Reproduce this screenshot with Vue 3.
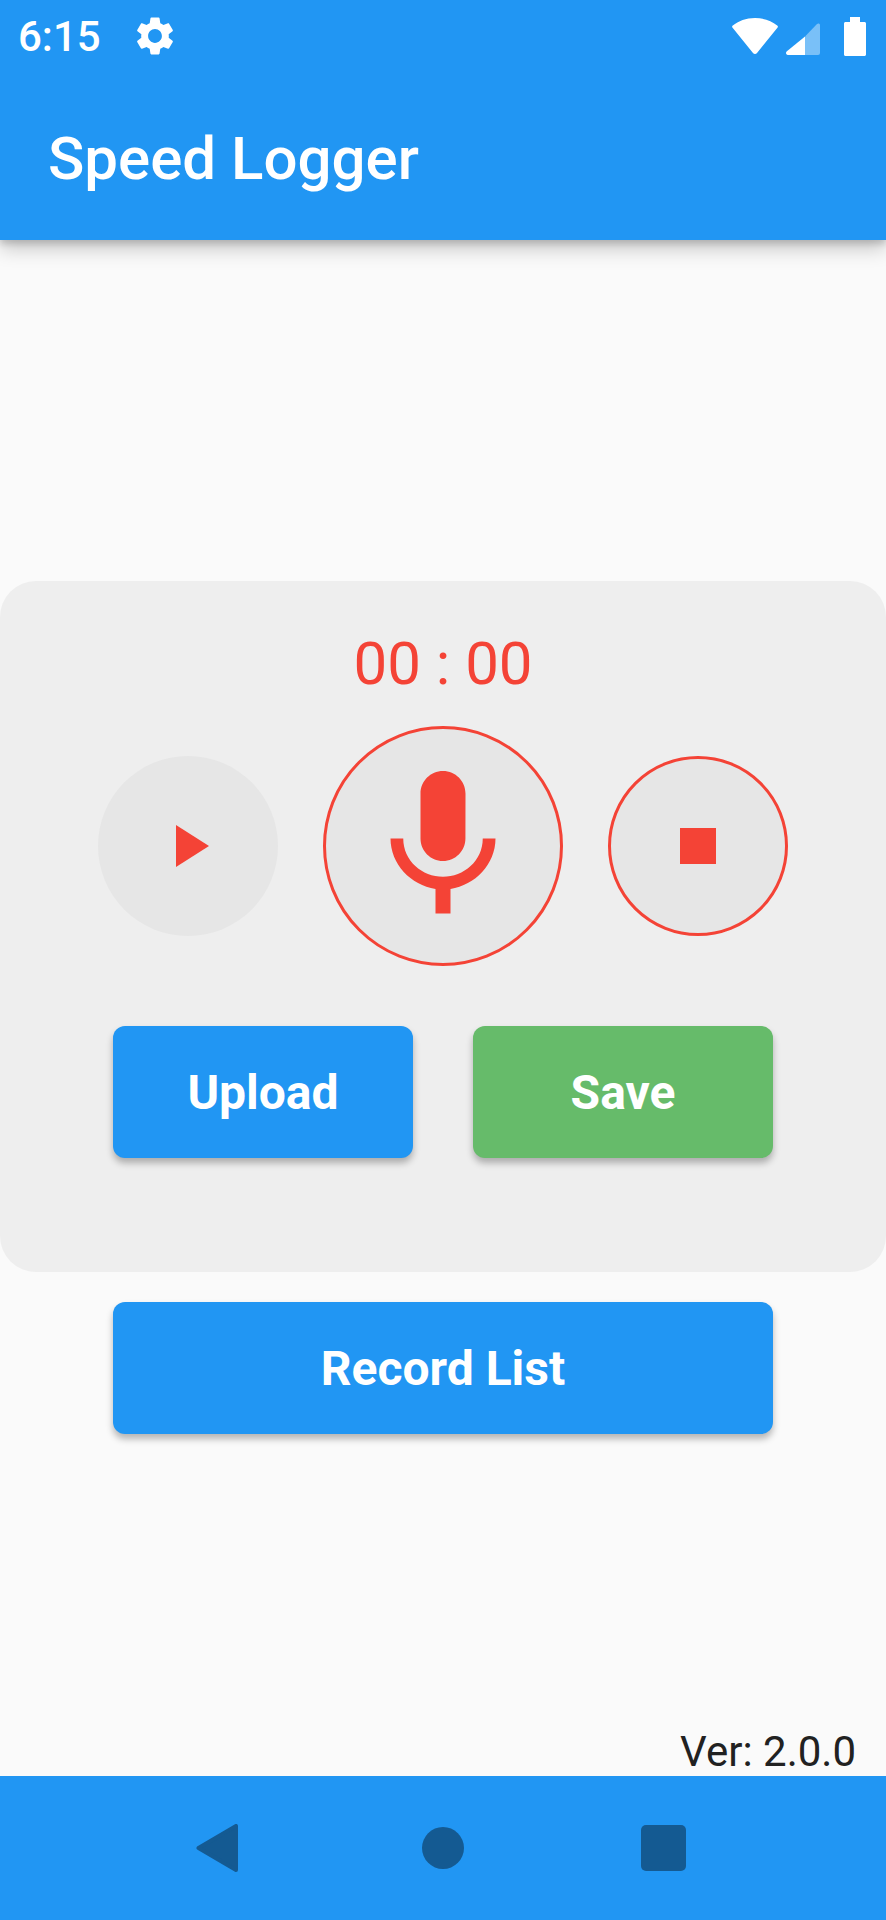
<template>
  <div class="phone">
    <header class="app-header">
      <div class="status-bar">
        <span class="clock">6:15</span>
        <svg class="gear" viewBox="0 0 24 24" fill="#fff">
          <path d="M19.14 12.94c.04-.3.06-.61.06-.94 0-.32-.02-.64-.07-.94l2.03-1.58c.18-.14.23-.41.12-.61l-1.92-3.32c-.12-.22-.37-.29-.59-.22l-2.39.96c-.5-.38-1.03-.7-1.62-.94l-.36-2.54c-.04-.24-.24-.41-.48-.41h-3.84c-.24 0-.43.17-.47.41l-.36 2.54c-.59.24-1.13.57-1.62.94l-2.39-.96c-.22-.08-.47 0-.59.22L2.74 8.87c-.12.21-.08.47.12.61l2.03 1.58c-.05.3-.09.63-.09.94s.02.64.07.94l-2.03 1.58c-.18.14-.23.41-.12.61l1.92 3.32c.12.22.37.29.59.22l2.39-.96c.5.38 1.03.7 1.62.94l.36 2.54c.05.24.24.41.48.41h3.84c.24 0 .44-.17.47-.41l.36-2.54c.59-.24 1.13-.56 1.62-.94l2.39.96c.22.08.47 0 .59-.22l1.92-3.32c.12-.22.07-.47-.12-.61l-2.01-1.58zM12 15.6c-1.98 0-3.6-1.62-3.6-3.6s1.62-3.6 3.6-3.6 3.6 1.62 3.6 3.6-1.62 3.6-3.6 3.6z" />
        </svg>
        <div class="status-icons">
          <svg class="wifi" viewBox="0 0 46 36" fill="#fff">
            <path d="M23 0C14 0 6.500 3 .8 7.500a1.500 1.500 0 0 0-.2 2.200L21 35a2.600 2.600 0 0 0 4 0L45.400 9.700a1.500 1.500 0 0 0-.2-2.200C39.500 3 32 0 23 0z" />
          </svg>
          <svg class="signal" viewBox="0 0 34 34" fill="#fff">
            <path d="M19 15.500V34H2a2 2 0 0 1-1.400-3.400z" />
            <path opacity=".4" d="M19 34V15.500L31 3c1-1 3-.6 3 1v28a2 2 0 0 1-2 2z" />
          </svg>
          <svg class="battery" viewBox="0 0 22 39" fill="#fff">
            <path d="M6 0h10v5h4.500c.8 0 1.500.7 1.500 1.500V37.500c0 .8-.7 1.500-1.500 1.500H1.500C.7 39 0 38.300 0 37.500V6.500C0 5.700.7 5 1.500 5H6z" />
          </svg>
        </div>
      </div>
      <div class="toolbar">Speed Logger</div>
    </header>

    <main class="content">
      <div class="center-group">
        <section class="recorder">
          <div class="timer">00 : 00</div>
          <div class="controls">
            <button class="round-btn small">
              <svg class="icon-sm" viewBox="0 0 24 24" fill="#f44336"><path d="M8 5v14l11-7z" /></svg>
            </button>
            <button class="round-btn large active">
              <svg class="icon-lg" viewBox="0 0 24 24" fill="#f44336">
                <path d="M12 14c1.660 0 2.990-1.340 2.990-3L15 5c0-1.660-1.340-3-3-3S9 3.340 9 5v6c0 1.660 1.340 3 3 3zm5.300-3c0 3-2.540 5.100-5.300 5.100S6.700 14 6.700 11H5c0 3.410 2.720 6.230 6 6.720V21h2v-3.280c3.280-.48 6-3.300 6-6.720h-1.700z" />
              </svg>
            </button>
            <button class="round-btn small active">
              <svg class="icon-sm" viewBox="0 0 24 24" fill="#f44336"><path d="M6 6h12v12H6z" /></svg>
            </button>
          </div>
          <div class="actions">
            <button class="action-btn blue">Upload</button>
            <button class="action-btn green">Save</button>
          </div>
        </section>
        <button class="action-btn blue wide">Record List</button>
      </div>
      <div class="version">Ver: 2.0.0</div>
    </main>

    <footer class="nav-bar">
      <svg class="nav-back" viewBox="0 0 42 48" fill="#145a92" stroke="#145a92" stroke-width="4" stroke-linejoin="round">
        <path d="M2.500 24L40 2v44z" />
      </svg>
      <div class="nav-home"></div>
      <div class="nav-recent"></div>
    </footer>
  </div>
</template>

<script setup>
// static screen, nothing to wire up
</script>

<style>
html,
body {
  margin: 0;
  background: #fafafa;
}
</style>

<style scoped>
.phone {
  width: 886px;
  height: 1920px;
  display: flex;
  flex-direction: column;
  background: #fafafa;
  font-family: Roboto, sans-serif;
  overflow: hidden;
}
.app-header {
  height: 240px;
  flex: none;
  background: #2196f3;
  color: #fff;
  box-shadow: 0 4px 6px rgba(0, 0, 0, 0.14), 0 9px 18px rgba(0, 0, 0, 0.2);
  position: relative;
  z-index: 1;
}
.status-bar {
  height: 72px;
  display: flex;
  align-items: center;
  padding: 0 20px 0 18px;
}
.clock {
  font-size: 42px;
  font-weight: 500;
}
.gear {
  width: 46px;
  height: 46px;
  margin-left: 31px;
}
.status-icons {
  margin-left: auto;
  display: flex;
  align-items: flex-start;
}
.wifi {
  width: 46px;
  height: 36px;
  margin-top: 1px;
}
.signal {
  width: 34px;
  height: 34px;
  margin: 4px 0 0 8px;
}
.battery {
  width: 22px;
  height: 39px;
  margin-left: 24px;
}
.toolbar {
  height: 168px;
  box-sizing: border-box;
  display: flex;
  align-items: center;
  padding: 5px 0 0 48px;
  font-size: 60px;
  font-weight: 500;
}
.content {
  flex: 1;
  display: flex;
  flex-direction: column;
  padding-top: 49px;
}
.center-group {
  flex: 1;
  display: flex;
  flex-direction: column;
  justify-content: center;
  align-items: center;
  gap: 30px;
}
.recorder {
  width: 100%;
  box-sizing: border-box;
  height: 691px;
  padding-top: 51px;
  border-radius: 36px;
  background: #eeeeee;
  display: flex;
  flex-direction: column;
  align-items: center;
}
.timer {
  height: 64px;
  line-height: 64px;
  font-size: 60px;
  color: #f44336;
}
.controls {
  margin-top: 30px;
  display: flex;
  align-items: center;
  gap: 45px;
}
.round-btn {
  padding: 0;
  border: 3px solid transparent;
  box-sizing: border-box;
  border-radius: 50%;
  background: #e6e6e6;
  display: flex;
  align-items: center;
  justify-content: center;
}
.round-btn.small {
  width: 180px;
  height: 180px;
}
.round-btn.large {
  width: 240px;
  height: 240px;
}
.round-btn.active {
  border-color: #f44336;
}
.icon-sm {
  width: 72px;
  height: 72px;
}
.icon-lg {
  width: 180px;
  height: 180px;
}
.actions {
  margin-top: 60px;
  display: flex;
  gap: 60px;
}
.action-btn {
  width: 300px;
  height: 132px;
  border: none;
  border-radius: 12px;
  color: #fff;
  font-family: inherit;
  font-size: 48px;
  font-weight: 700;
  box-shadow: 0 5px 7px rgba(0, 0, 0, 0.28);
}
.action-btn.wide {
  width: 660px;
}
.blue {
  background: #2196f3;
}
.green {
  background: #66bb6a;
}
.version {
  height: 50px;
  line-height: 52px;
  text-align: right;
  padding-right: 30px;
  font-size: 42px;
  color: #212121;
}
.nav-bar {
  height: 144px;
  flex: none;
  background: #2196f3;
  display: flex;
  align-items: center;
  justify-content: center;
  padding-right: 4px;
}
.nav-back {
  width: 42px;
  height: 48px;
}
.nav-home {
  width: 42px;
  height: 42px;
  margin-left: 184px;
  border-radius: 50%;
  background: #145a92;
}
.nav-recent {
  width: 45px;
  height: 46px;
  margin-left: 177px;
  border-radius: 5px;
  background: #145a92;
}
</style>
